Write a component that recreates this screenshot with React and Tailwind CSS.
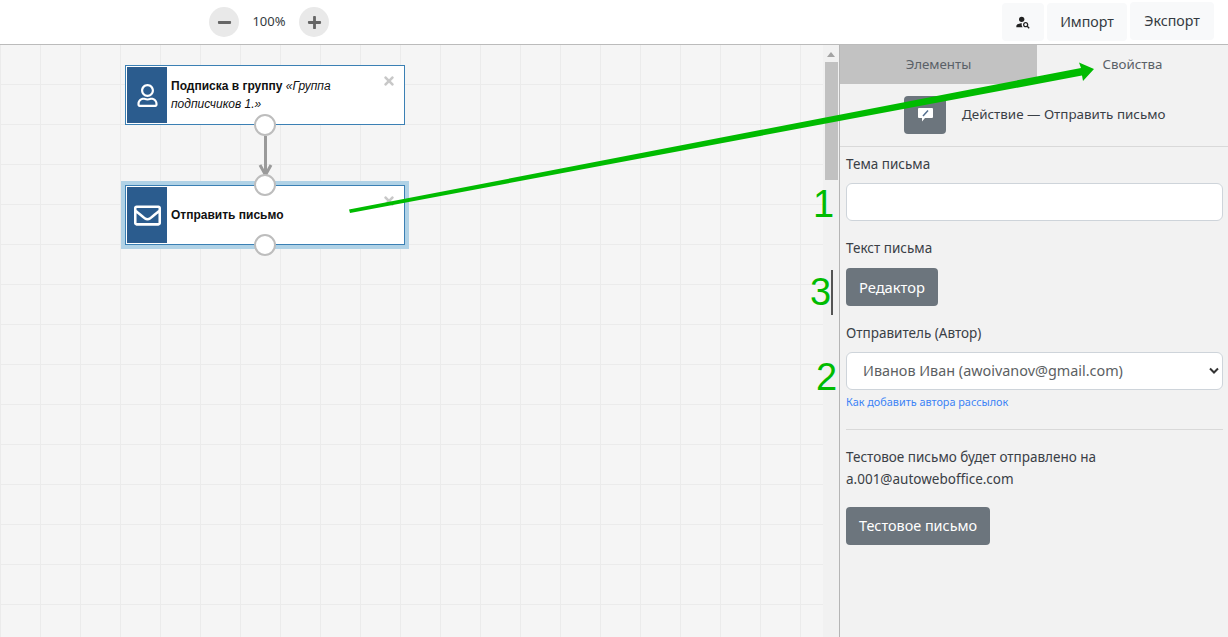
import React from 'react';
import { FaMinus, FaPlus, FaTimes, FaRegUser, FaRegEnvelope } from 'react-icons/fa';
import { MdPersonSearch } from 'react-icons/md';

const Port = ({ className }) => (
  <div className={`absolute left-1/2 -translate-x-1/2 w-[22px] h-[22px] rounded-full bg-white border-2 border-[#bdbdbd] z-10 ${className}`}></div>
);

const FlowNode = ({ icon, selected, top, children }) => (
  <div
    className={`absolute left-[125px] w-[280px] h-[60px] bg-white border border-[#3b80b4] flex items-stretch p-px ${selected ? 'outline-4 outline-[#b0d2e6]' : ''} ${top}`}
  >
    <div className="w-[40px] shrink-0 bg-[#2b5c8e] text-white flex items-center justify-center">{icon}</div>
    <div className="flex-1 pl-1 pr-10 flex items-center font-['Liberation_Sans',sans-serif] text-[12px] leading-[18px] text-[#111]">
      <div>{children}</div>
    </div>
    <FaTimes className="absolute right-[8px] top-[8px] text-[#c8c8c8] text-[14px]" />
    <Port className="-bottom-[12px]" />
  </div>
);

const Canvas = () => (
  <div className="relative flex-1 bg-[#f5f5f5] bg-[linear-gradient(to_right,#ebebeb_1px,transparent_1px),linear-gradient(to_bottom,#ebebeb_1px,transparent_1px)] bg-[size:40px_40px] bg-[position:0px_-1px]">
    <FlowNode top="top-[20px]" icon={<FaRegUser className="text-[23px]" />}>
      <b>Подписка в группу </b>
      <i>«Группа подписчиков 1.»</i>
    </FlowNode>
    <svg className="absolute left-[255px] top-[90px] w-[20px] h-[44px]" viewBox="0 0 20 44">
      <path d="M10.5 1V40M5 30l5.500 10 5.500-10" fill="none" stroke="#9a9a9a" strokeWidth="3" />
    </svg>
    <FlowNode selected top="top-[140px]" icon={<FaRegEnvelope className="text-[27px]" />}>
      <b>Отправить письмо</b>
    </FlowNode>
    <Port className="!left-[265px] top-[129px]" />
  </div>
);

const Scrollbar = () => (
  <div className="w-[16px] shrink-0 bg-[#f1f1f1] flex flex-col items-center">
    <div className="mt-[7px] w-0 h-0 border-x-[4px] border-x-transparent border-b-[5px] border-b-[#a3a3a3]"></div>
    <div className="mt-[5px] w-[13px] h-[118px] bg-[#c1c1c1]"></div>
  </div>
);

const Field = ({ label, children }) => (
  <div>
    <div className="mb-2 leading-[22px]">{label}</div>
    {children}
  </div>
);

const Sidebar = () => (
  <div className="w-[389px] shrink-0 border-l border-[#b5b5b5] bg-[#f2f2f2] text-[#3a4046] font-['Noto_Sans',sans-serif] text-[13.500px]">
    <div className="flex h-[39px] text-[#5a6168] text-[13.300px]">
      <div className="w-[197px] bg-[#c2c2c2] flex items-center justify-center">Элементы</div>
      <div className="flex-1 flex items-center justify-center">Свойства</div>
    </div>
    <div className="h-[63px] border-b border-[#d9d9d9] flex items-center pl-[64px] gap-4">
      <div className="w-[42px] h-[38px] rounded bg-[#6c757d] flex items-center justify-center">
        <svg width="15" height="14" viewBox="0 0 15 14">
          <path d="M1 0H14a1 1 0 0 1 1 1V9a1 1 0 0 1-1 1H7L4 13.500V10H1a1 1 0 0 1-1-1V1a1 1 0 0 1 1-1Z" fill="#fff" />
          <path d="M5 8L10 2.500" stroke="#55708f" strokeWidth="1.500" />
        </svg>
      </div>
      <span className="-translate-y-px text-[13.400px]">Действие — Отправить письмо</span>
    </div>
    <div className="px-[6px] pr-[5px] pt-[6px] flex flex-col">
      <Field label="Тема письма">
        <input className="block w-full h-[38px] bg-white border border-[#ced4da] rounded-md" />
      </Field>
      <div className="mt-[16px]">
        <Field label="Текст письма">
          <button className="mt-px h-[38px] px-[13px] rounded bg-[#6c757d] text-white text-[14.700px]">Редактор</button>
        </Field>
      </div>
      <div className="mt-[16px]">
        <Field label="Отправитель (Автор)">
          <div className="relative">
            <select className="block w-full h-[38px] pl-4 bg-white border border-[#ced4da] rounded-md appearance-none text-[#5c5f63] text-[14.400px]">
              <option>Иванов Иван (awoivanov@gmail.com)</option>
            </select>
            <svg className="absolute right-[4px] top-[15px]" width="10" height="8" viewBox="0 0 10 8">
              <path d="M1 1.500l4 4 4-4" fill="none" stroke="#333" strokeWidth="2" />
            </svg>
          </div>
        </Field>
      </div>
      <a className="mt-[4px] text-[10.850px] leading-[16px] text-[#3b82f6]">Как добавить автора рассылок</a>
      <div className="mt-[19px] border-t border-[#d9d9d9]"></div>
      <p className="mt-[16px] leading-[22px]">
        Тестовое письмо будет отправлено на
        <br />
        a.001@autoweboffice.com
      </p>
      <div className="mt-[17px]">
        <button className="h-[38px] px-[13px] rounded bg-[#6c757d] text-white text-[14.400px]">Тестовое письмо</button>
      </div>
    </div>
  </div>
);

const Header = () => (
  <div className="relative h-[45px] shrink-0 bg-white border-b border-[#bbbbbb] flex items-center justify-between pl-[209px] pr-[14px] font-['Noto_Sans',sans-serif] text-[14.200px] text-[#343a40]">
    <div className="flex items-center">
      <button className="w-[30px] h-[30px] rounded-full bg-[#e9e9e9] text-[#666] flex items-center justify-center">
        <FaMinus className="text-[15px]" />
      </button>
      <span className="w-[60px] text-center text-[13px]">100%</span>
      <button className="w-[30px] h-[30px] rounded-full bg-[#e9e9e9] text-[#666] flex items-center justify-center">
        <FaPlus className="text-[15px]" />
      </button>
    </div>
    <div className="flex items-center gap-[3px]">
      <button className="w-[42px] h-[38px] rounded bg-[#f8f9fa] flex items-center justify-center text-[#222]">
        <MdPersonSearch className="text-[16px]" />
      </button>
      <button className="w-[80px] h-[38px] rounded bg-[#f8f9fa]">Импорт</button>
      <button className="w-[84px] h-[38px] rounded bg-[#f8f9fa] -translate-y-px">Экспорт</button>
    </div>
  </div>
);

// green pointer and numbers drawn over the screenshot
const Annotations = () => (
  <>
    <svg className="absolute inset-0 z-20 pointer-events-none" width="1228" height="637" viewBox="0 0 1228 637">
      <path d="M349 209.500L1081 68L1079 62.500L1094 69L1083 81L1082 75.500L350 213Z" fill="#00bb00" />
    </svg>
    <div className="absolute z-20 inset-0 pointer-events-none font-['Liberation_Sans',sans-serif] text-[38px] leading-none text-[#00bb00]">
      <span className="absolute left-[813px] top-[185px]">1</span>
      <span className="absolute left-[810px] top-[273px]">3</span>
      <span className="absolute left-[816px] top-[358px]">2</span>
      <div className="absolute left-[831px] top-[270px] w-[2px] h-[45px] bg-[#555]"></div>
    </div>
  </>
);

export default function App() {
  return (
    <div className="relative h-[637px] w-[1228px] overflow-hidden flex flex-col bg-white">
      <Header />
      <div className="flex flex-1 min-h-0">
        <Canvas />
        <Scrollbar />
        <Sidebar />
      </div>
      <Annotations />
    </div>
  );
}
